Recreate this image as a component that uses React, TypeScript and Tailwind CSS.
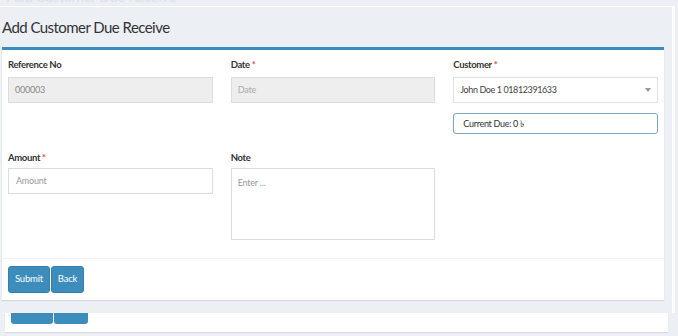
import React from "react";

const font = { fontFamily: "Lato, 'Open Sans', sans-serif" };

function Label({ text, req, mb }: { text: string; req?: boolean; mb: string }) {
  return (
    <div className={`h-[14px] ${mb} text-[9.5px] font-bold leading-[14px] text-[#333] tracking-[-0.35px]`}>
      {text}
      {req && <span className="text-[#dd4b39] ml-[2px]">*</span>}
    </div>
  );
}

export default function App() {
  return (
    <div className="w-[678px] h-[336px] bg-[#ecf0f5] overflow-hidden" style={font}>
      {/* faint background page title */}
      <div className="h-[6px] overflow-hidden">
        <div className="mt-[-11px] ml-[7px] text-[15px] leading-[15px] text-[#dde1e7] tracking-[-0.5px] select-none" aria-hidden="true">
          Add Customer Due Receive
        </div>
      </div>

      {/* overlay page */}
      <div className="w-[675px] h-[307px] border-t border-r-[3px] border-white bg-[#ecf0f5] flex flex-col">
        <div className="h-[40px] flex items-center pl-[2px] text-[15px] text-[#333] tracking-[-0.55px]">
          Add Customer Due Receive
        </div>
        <div className="ml-[2px] w-[662px] h-[253px] bg-white border-t-[3px] border-[#3c8dbc] shadow-[0_1px_1px_rgba(0,0,0,0.1)] flex flex-col">
          <div className="px-[6px] pt-[8px] pb-[18px] grid grid-cols-3 gap-x-[18px] gap-y-[17px]">
            <div>
              <Label text="Reference No" mb="mb-[5px]" />
              <div className="h-[26px] bg-[#eeeeee] border border-[#dcdcdc] px-[6px] flex items-center text-[9px] text-[#888] tracking-[-0.2px]">000003</div>
            </div>
            <div>
              <Label text="Date" req mb="mb-[5px]" />
              <div className="h-[26px] bg-[#eeeeee] border border-[#dcdcdc] px-[6px] flex items-center text-[9px] text-[#aaa] tracking-[-0.2px]">Date</div>
            </div>
            <div>
              <Label text="Customer" req mb="mb-[5px]" />
              <div className="h-[26px] bg-white border border-[#e0e0e0] pl-[6px] pr-[6px] flex items-center justify-between text-[9px] text-[#444] tracking-[-0.4px]">
                <span>John Doe 1 01812391633</span>
                <span className="w-0 h-0 border-l-[3px] border-r-[3px] border-t-[4px] border-l-transparent border-r-transparent border-t-[#999]" />
              </div>
              <div className="mt-[10px] h-[21px] rounded-[3px] border border-[#7ea6bd] px-[9px] flex items-center text-[9px] text-[#333] tracking-[-0.3px]">
                Current Due: 0 ৳
              </div>
            </div>
            <div>
              <Label text="Amount" req mb="mb-[3px]" />
              <div className="h-[26px] bg-white border border-[#dcdcdc] px-[7px] flex items-center text-[9px] text-[#999] tracking-[-0.2px]">Amount</div>
            </div>
            <div>
              <Label text="Note" mb="mb-[3px]" />
              <div className="h-[72px] bg-white border border-[#dcdcdc] px-[6px] pt-[7px] text-[9px] text-[#999] tracking-[-0.2px]">Enter ...</div>
            </div>
            <div />
          </div>
          <div className="border-t border-[#f4f4f4] px-[6px] pt-[7px] flex gap-[1px]">
            <button className="h-[27px] w-[42px] rounded-[3px] bg-[#3c8dbc] border border-[#367fa9] text-white text-[9.5px] tracking-[-0.2px]">Submit</button>
            <button className="h-[27px] w-[33px] rounded-[3px] bg-[#3c8dbc] border border-[#367fa9] text-white text-[9.5px] tracking-[-0.2px]">Back</button>
          </div>
        </div>
      </div>

      {/* background page box remnant */}
      <div className="ml-[5px] w-[663px] h-[19px] bg-white shadow-[0_1px_1px_rgba(0,0,0,0.08)] flex gap-[1px] pl-[6px]">
        <div className="w-[42px] h-[11px] bg-[#3c8dbc] rounded-b-[3px]" />
        <div className="w-[34px] h-[11px] bg-[#3c8dbc] rounded-b-[3px]" />
      </div>
    </div>
  );
}
